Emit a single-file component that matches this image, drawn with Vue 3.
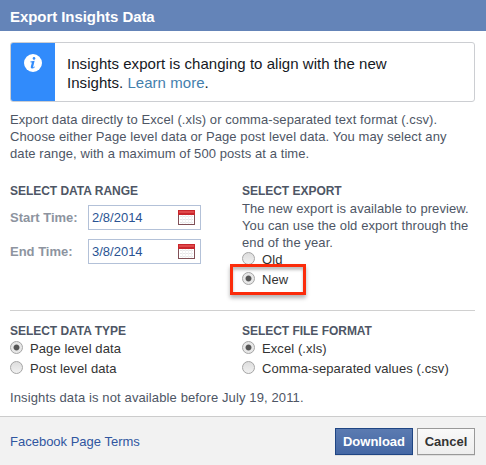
<template>
  <div class="dialog">
    <header class="dialog-header">Export Insights Data</header>

    <main class="dialog-body">
      <div class="notice">
        <div class="notice-side">
          <svg class="info-icon" viewBox="0 0 18 18" aria-hidden="true">
            <circle cx="9" cy="9" r="9" fill="#fff" />
            <circle cx="10" cy="4.4" r="1.3" fill="#318bfb" />
            <path
              d="M6.400 7.500 10.600 6.800 9.200 12.700q-.2.900.4.600l1.100-.8.3.5Q9.300 14.800 7.900 14.600q-1.500-.2-1.100-1.800L7.900 8.600l-1.500-.3z"
              fill="#318bfb"
            />
          </svg>
        </div>
        <p class="notice-text">
          Insights export is changing to align with the new<br />
          Insights. <a class="notice-link" href="#">Learn more</a>.
        </p>
      </div>

      <p class="intro">
        Export data directly to Excel (.xls) or comma-separated text format (.csv).<br />
        Choose either Page level data or Page post level data. You may select any<br />
        date range, with a maximum of 500 posts at a time.
      </p>

      <div class="columns columns-range">
        <section class="column">
          <h2 class="heading">Select Data Range</h2>
          <div v-for="field in dates" :key="field.label" class="date-row">
            <span class="date-label">{{ field.label }}</span>
            <div class="date-input">
              <span>{{ field.value }}</span>
              <svg class="calendar-icon" viewBox="0 0 17 15" aria-hidden="true">
                <rect x=".5" y=".5" width="16" height="14" fill="#fff" stroke="#805057" />
                <path d="M2 6.500h13M2 9.500h13M2 12.500h13" stroke="#e6e6e8" />
                <path d="M4.500 5v9M7.500 5v9M10.500 5v9M13.500 5v9" stroke="#f2f2f3" />
                <path d="M0 0h17v5H0z" fill="#c9262c" />
                <path d="M1 1h15v2H1z" fill="#e0484a" />
              </svg>
            </div>
          </div>
        </section>

        <section class="column">
          <h2 class="heading">Select Export</h2>
          <p class="hint">
            The new export is available to preview.<br />
            You can use the old export through the<br />
            end of the year.
          </p>
          <div class="export-options">
            <label v-for="option in exportOptions" :key="option" class="option">
              <input v-model="exportType" class="radio" type="radio" name="export" :value="option" />
              {{ option }}
            </label>
            <div class="highlight" />
          </div>
        </section>
      </div>

      <div class="columns columns-type">
        <section class="column">
          <h2 class="heading">Select Data Type</h2>
          <label v-for="option in dataTypes" :key="option" class="option">
            <input v-model="dataType" class="radio" type="radio" name="data" :value="option" />
            {{ option }}
          </label>
        </section>

        <section class="column">
          <h2 class="heading">Select File Format</h2>
          <label v-for="option in fileFormats" :key="option" class="option">
            <input v-model="fileFormat" class="radio" type="radio" name="format" :value="option" />
            {{ option }}
          </label>
        </section>
      </div>

      <p class="availability">Insights data is not available before July 19, 2011.</p>
    </main>

    <footer class="dialog-footer">
      <a class="terms" href="#">Facebook Page Terms</a>
      <button class="btn btn-primary" type="button">Download</button>
      <button class="btn btn-cancel" type="button">Cancel</button>
    </footer>
  </div>
</template>

<script setup>
import { ref } from 'vue'

const dates = [
  { label: 'Start Time:', value: '2/8/2014' },
  { label: 'End Time:', value: '3/8/2014' },
]

const exportOptions = ['Old', 'New']
const dataTypes = ['Page level data', 'Post level data']
const fileFormats = ['Excel (.xls)', 'Comma-separated values (.csv)']

const exportType = ref('New')
const dataType = ref('Page level data')
const fileFormat = ref('Excel (.xls)')
</script>

<style>
body {
  margin: 0;
}
</style>

<style scoped>
* {
  box-sizing: border-box;
}

p,
h2 {
  margin: 0;
}

a {
  text-decoration: none;
}

.dialog {
  background: #fff;
  color: #4e5665;
  display: flex;
  flex-direction: column;
  font-family: 'Liberation Sans', Arial, sans-serif;
  font-size: 13px;
  height: 465px;
  letter-spacing: 0.09px;
  line-height: 17px;
  overflow: hidden;
  white-space: nowrap;
  width: 486px;
}

.dialog-header {
  background: #6484b8;
  color: #fff;
  font-size: 15px;
  font-weight: 700;
  height: 31px;
  letter-spacing: -0.06px;
  line-height: 33px;
  padding-left: 10px;
}

.dialog-body {
  flex: 1;
  padding: 11px 11px 0 10px;
}

.notice {
  border: 1px solid #ccced2;
  border-radius: 3px;
  display: flex;
  height: 60px;
  overflow: hidden;
}

.notice-side {
  background: #318bfb;
  display: flex;
  justify-content: center;
  padding-top: 11px;
  width: 44px;
}

.info-icon {
  height: 18px;
  width: 18px;
}

.notice-text {
  color: #141823;
  font-size: 15px;
  letter-spacing: 0.04px;
  line-height: 19px;
  padding: 11px 0 0 12px;
}

.notice-link {
  color: #4480ad;
}

.intro {
  margin-top: 9px;
}

.columns {
  display: grid;
  grid-template-columns: 232px 1fr;
}

.columns-range {
  border-bottom: 1px solid #d0d0d0;
  height: 128px;
  margin-top: 21px;
}

.columns-type {
  padding-top: 12px;
}

.heading {
  font-size: 12px;
  font-weight: 700;
  letter-spacing: -0.03px;
  line-height: 17px;
  text-transform: uppercase;
}

.date-row {
  align-items: center;
  display: flex;
  height: 25px;
  margin: 5px 0 9px;
}

.date-row + .date-row {
  margin-top: 0;
}

.date-label {
  color: #8d949f;
  font-weight: 700;
  letter-spacing: 0;
  width: 78px;
}

.date-input {
  align-items: center;
  border: 1px solid #b3c1d8;
  color: #2a5393;
  display: flex;
  height: 25px;
  justify-content: space-between;
  letter-spacing: 0;
  padding: 0 5px 0 3px;
  width: 113px;
}

.calendar-icon {
  height: 15px;
  width: 17px;
}

.export-options {
  position: relative;
}

.option {
  align-items: center;
  color: #333;
  display: flex;
  gap: 7px;
  height: 20px;
  padding-bottom: 3px;
}

.radio {
  appearance: none;
  background: linear-gradient(#ddd, #f1f1f1);
  border: 1px solid #a5a5a5;
  border-radius: 50%;
  height: 13px;
  margin: 0;
  transform: translateY(-1px);
  width: 13px;
}

.radio:checked {
  background: radial-gradient(circle, #555 0 2.5px, #e7e7e7 3.4px);
}

/* Red frame laid over the chosen export option. */
.highlight {
  border: 3px solid #fb2c0b;
  box-shadow:
    0 3px 4px rgba(0, 0, 0, 0.3),
    inset 0 3px 3px rgba(0, 0, 0, 0.25);
  height: 31px;
  left: -12px;
  pointer-events: none;
  position: absolute;
  top: 13px;
  width: 76px;
}

.availability {
  letter-spacing: 0.12px;
  margin-top: 9px;
}

.dialog-footer {
  align-items: center;
  background: #f2f2f2;
  border-top: 1px solid #ccc;
  display: flex;
  height: 49px;
  padding: 0 11px 0 10px;
}

.terms {
  color: #3056a0;
  letter-spacing: 0;
  margin-right: auto;
}

.btn {
  border: 1px solid #999;
  box-shadow: 0 1px 0 rgba(0, 0, 0, 0.08);
  font-family: inherit;
  font-size: 13px;
  font-weight: 700;
  height: 27px;
  letter-spacing: 0;
  padding: 0;
}

.btn-primary {
  background: linear-gradient(#5b7bb1, #4467a4);
  border-color: #1f4583;
  color: #fff;
  width: 78px;
}

.btn-cancel {
  background: linear-gradient(#f9f9f9, #eee);
  color: #333;
  margin-left: 4px;
  width: 58px;
}
</style>
